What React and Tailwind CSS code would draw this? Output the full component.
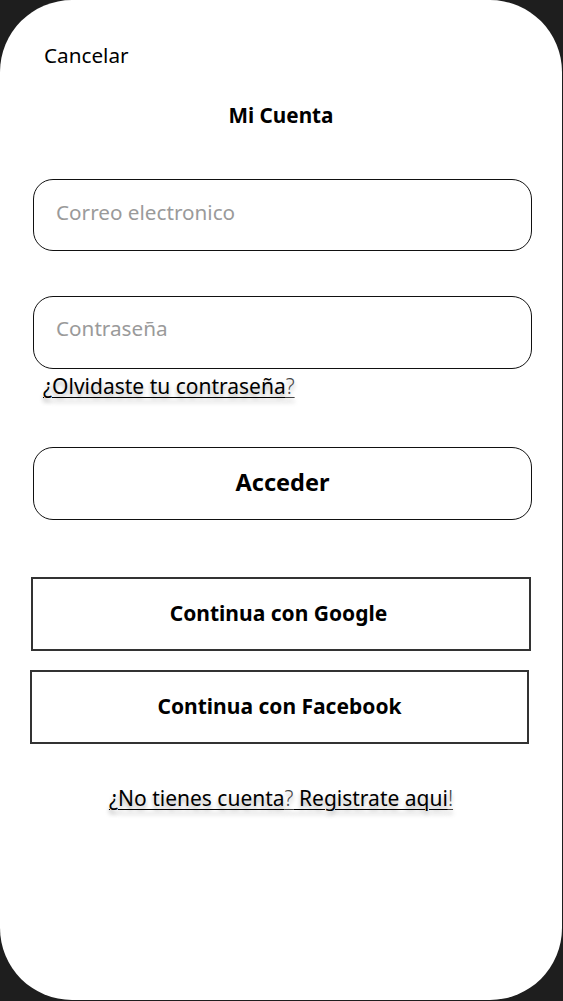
import React from "react";

export default function App() {
  const font = { fontFamily: '"Noto Sans", "Open Sans", sans-serif' };
  return (
    <div className="w-[563px] h-[1001px] bg-[#1e1e1e]" style={font}>
      <div className="w-[562px] h-[1000px] bg-white rounded-[72px] flex flex-col text-black">
        <div className="pt-[41px] pl-[44px] text-[20.7px] leading-[28px]">Cancelar</div>
        <div className="mt-[32px] text-center text-[20.7px] leading-[28px] font-bold">Mi Cuenta</div>

        <div className="mt-[50px] ml-[33px] w-[499px] h-[72px] border-[1.5px] border-[#111] rounded-[20px] flex items-center pl-[22px] pb-[4px]">
          <span className="text-[20.7px] text-[#9a9a9a]">Correo electronico</span>
        </div>

        <div className="mt-[45px] ml-[33px] w-[499px] h-[73px] border-[1.5px] border-[#111] rounded-[20px] flex items-center pl-[22px] pb-[7px]">
          <span className="text-[20.7px] text-[#9a9a9a]">Contraseña</span>
        </div>

        <div className="mt-[3px] ml-[43px] text-[21px] leading-[28px] [text-shadow:0_4px_4px_rgba(0,0,0,0.3)]">
          <span className="underline underline-offset-[3px] decoration-1">¿Olvidaste tu contraseña</span>
          <span className="underline underline-offset-[3px] decoration-1 font-light text-[#444]">?</span>
        </div>

        <div className="mt-[47px] ml-[33px] w-[499px] h-[73px] border-[1.5px] border-[#111] rounded-[20px] flex items-center justify-center pb-[2px]">
          <span className="text-[23.5px] font-bold">Acceder</span>
        </div>

        <div className="mt-[57px] ml-[31px] w-[500px] h-[74px] border-2 border-[#333] flex items-center justify-center pr-[5px]">
          <span className="text-[21px] font-bold">Continua con Google</span>
        </div>

        <div className="mt-[19px] ml-[30px] w-[499px] h-[74px] border-2 border-[#333] flex items-center justify-center">
          <span className="text-[21px] font-bold">Continua con Facebook</span>
        </div>

        <div className="mt-[40px] text-center text-[21px] leading-[28px] [text-shadow:0_4px_4px_rgba(0,0,0,0.3)]">
          <span className="underline underline-offset-[3px] decoration-1">¿No tienes cuenta</span>
          <span className="underline underline-offset-[3px] decoration-1 font-light text-[#444]">?</span>
          <span className="underline underline-offset-[3px] decoration-1"> Registrate aqui</span>
          <span className="underline underline-offset-[3px] decoration-1 font-light text-[#444]">!</span>
        </div>
      </div>
    </div>
  );
}
